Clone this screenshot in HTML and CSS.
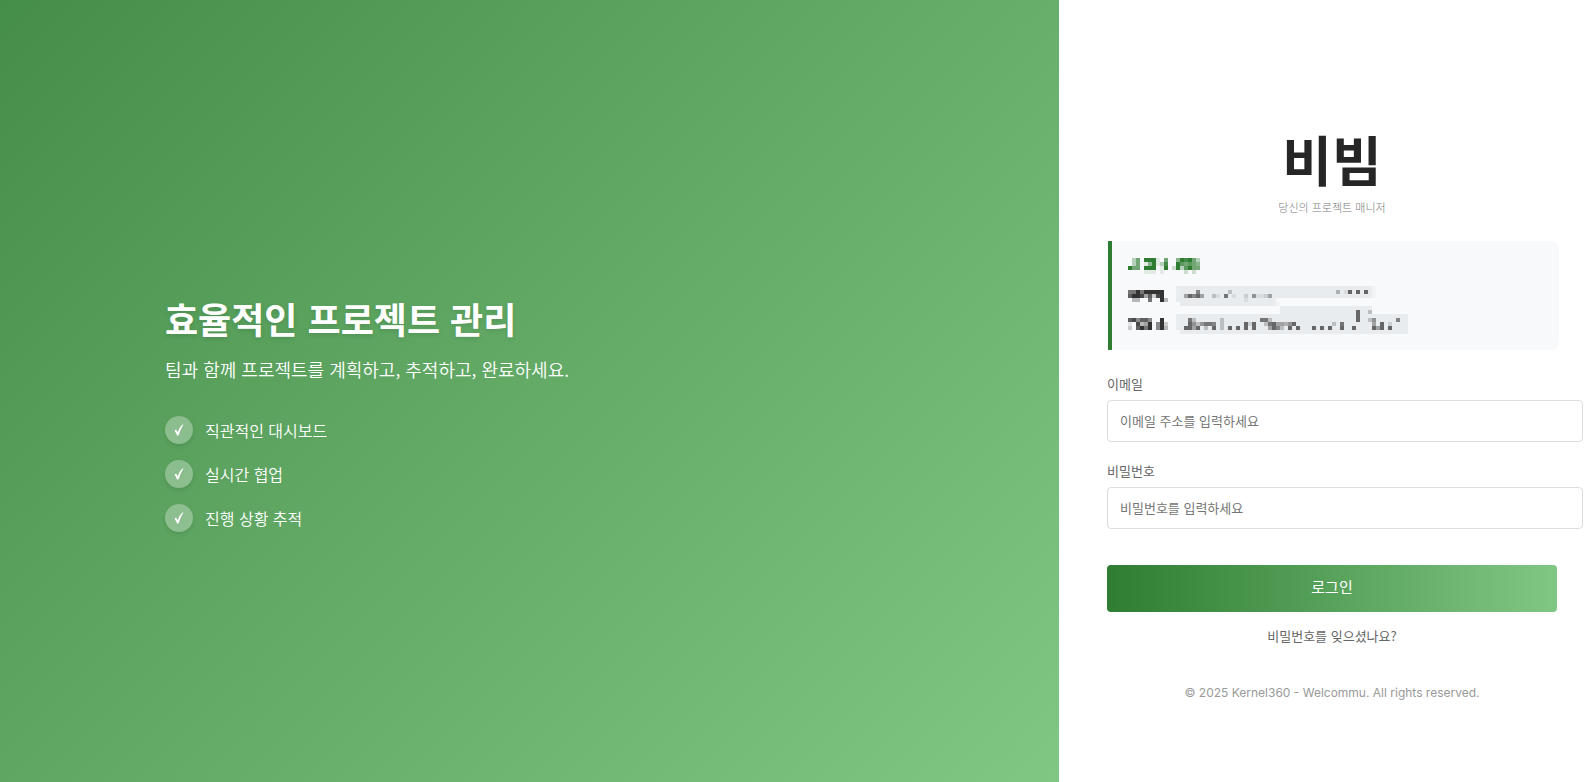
FILE: index.html
```html
<!DOCTYPE html>
<html lang="ko">
<head>
<meta charset="utf-8">
<title>비빔</title>
<link rel="stylesheet" href="styles.css">
</head>
<body>
<main class="page">
  <section class="hero">
    <div class="hero-content">
      <h1 class="hero-title">효율적인 프로젝트 관리</h1>
      <p class="hero-text">팀과 함께 프로젝트를 계획하고, 추적하고, 완료하세요.</p>
      <ul class="features">
        <li class="feature"><span class="check"><svg viewBox="0 0 10 12" width="10" height="12"><path d="M.5 6.8 2 5.6 3.8 8.2C5 4.800 6.600 2 8.800.3L9.400.8C7.500 3.500 6 7 4.700 11.300L3 11.500C2.400 9.600 1.600 8 .5 6.800Z"/></svg></span>직관적인 대시보드</li>
        <li class="feature"><span class="check"><svg viewBox="0 0 10 12" width="10" height="12"><path d="M.5 6.8 2 5.6 3.8 8.2C5 4.800 6.600 2 8.800.3L9.400.8C7.500 3.500 6 7 4.700 11.300L3 11.500C2.400 9.600 1.600 8 .5 6.800Z"/></svg></span>실시간 협업</li>
        <li class="feature"><span class="check"><svg viewBox="0 0 10 12" width="10" height="12"><path d="M.5 6.8 2 5.6 3.8 8.2C5 4.800 6.600 2 8.800.3L9.400.8C7.500 3.500 6 7 4.700 11.300L3 11.500C2.400 9.600 1.600 8 .5 6.800Z"/></svg></span>진행 상황 추적</li>
      </ul>
    </div>
  </section>
  <section class="login">
    <header class="brand">
      <div class="brand-name">비빔</div>
      <p class="brand-text">당신의 프로젝트 매니저</p>
    </header>
    <div class="account">
      <svg class="mosaic" id="mosaic" viewBox="0 0 70 20" width="280" height="80" shape-rendering="crispEdges">
        <path fill="#e8ecef" d="M13 7H61V10H37V12H13ZM38 12H61V14H70V19H13V14H38Z"/>
        <path fill="#eaedf0" d="M12 7H13V11H12ZM12 14H13V18H12Z"/>
        <path fill="#f1f3f5" d="M61 7H62V10H61ZM37 11H38V12H37Z"/>
      </svg>
    </div>
    <form class="form">
      <label class="label" for="email">이메일</label>
      <input class="input" id="email" type="email" placeholder="이메일 주소를 입력하세요">
      <label class="label" for="password">비밀번호</label>
      <input class="input" id="password" type="password" placeholder="비밀번호를 입력하세요">
      <button class="submit" type="button">로그인</button>
    </form>
    <a class="forgot" href="#">비밀번호를 잊으셨나요?</a>
    <footer class="footer">© 2025 Kernel360 - Welcommu. All rights reserved.</footer>
  </section>
</main>
<script src="mosaic.js"></script>
</body>
</html>
```
FILE: styles.css
```css
body {
  margin: 0;
  font-family: "Noto Sans CJK KR", sans-serif;
  background: #fff;
  overflow-x: hidden;
}

.page {
  display: grid;
  grid-template-columns: 1059fr 535fr;
  min-height: 100vh;
}

.hero {
  display: flex;
  align-items: center;
  justify-content: center;
  padding: 46px 64px 0;
  background: linear-gradient(135deg, #458e49, #81c784);
  color: #fff;
}

.hero-content {
  flex: 0 1 729px;
}

.hero-title {
  margin: 0 0 15px;
  font-size: 36px;
  line-height: 44px;
  font-weight: 700;
  text-shadow: 0 2px 4px rgba(0, 0, 0, 0.1);
}

.hero-text {
  margin: 0 0 33px;
  font-size: 18px;
  line-height: 28px;
  font-weight: 350;
}

.features {
  display: grid;
  gap: 16px;
  margin: 0;
  padding: 0;
  list-style: none;
}

.feature {
  display: flex;
  align-items: center;
  gap: 12px;
  font-size: 16px;
  line-height: 28px;
  font-weight: 350;
}

.check {
  display: flex;
  align-items: center;
  justify-content: center;
  width: 28px;
  height: 28px;
  border-radius: 50%;
  background: rgba(255, 255, 255, 0.3);
  box-shadow: 0 2px 4px rgba(0, 0, 0, 0.1);
}

.check path {
  fill: #fff;
}

.login {
  display: flex;
  flex-direction: column;
  justify-content: center;
  padding: 47px 37px 0 48px;
}

.brand {
  margin-bottom: 26px;
  text-align: center;
}

.brand-name {
  font-size: 54px;
  line-height: 64px;
  font-weight: 700;
  color: #262626;
}

.brand-text {
  margin: 8px 0 0;
  font-size: 11px;
  line-height: 16px;
  font-weight: 300;
  color: #777;
}

.account {
  margin: 0 -2px 0 1px;
  padding: 17px 16px 12px;
  border-left: 4px solid #2e7d32;
  border-radius: 0 8px 8px 0;
  background: #f8f9fb;
}

.mosaic {
  display: block;
}

.form {
  display: flex;
  flex-direction: column;
  align-items: flex-start;
  margin-top: 24px;
}

.label {
  margin-bottom: 6px;
  font-size: 13px;
  line-height: 20px;
  color: #666;
}

.input {
  width: 100%;
  height: 40px;
  box-sizing: content-box;
  margin: 0 0 19px;
  padding: 0 12px;
  border: 1px solid #ddd;
  border-radius: 4px;
  font-family: inherit;
  font-size: 13px;
  background: #fff;
}

.input::placeholder {
  color: #757575;
}

.submit {
  width: 100%;
  height: 47px;
  margin-top: 17px;
  padding: 0 0 4px;
  border: 0;
  border-radius: 4px;
  background: linear-gradient(90deg, #2e7d32, #81c784);
  color: #fff;
  font-family: inherit;
  font-size: 15px;
}

.forgot {
  align-self: center;
  margin-top: 14px;
  font-size: 13px;
  line-height: 20px;
  color: #666;
  text-decoration: none;
}

.footer {
  margin-top: 37px;
  text-align: center;
  font-family: Inter, sans-serif;
  font-size: 12px;
  line-height: 20px;
  color: #999;
}
```
FILE: mosaic.js
```js
// Each run: colour, row, first column, shades (0 = empty, 9 = solid).
const GREEN = "#2e7d32";
const DARK = "#333333";
const GREY = "#666666";
const runs = [
  [GREEN, 0, 1, "36099910600598963"],
  [GREEN, 1, 1, "36015913800976765"],
  [GREEN, 2, 0, "966099901902937966"],
  [GREEN, 3, 4, "11101000002020"],
  [DARK, 8, 0, "669699999"],
  [DARK, 9, 0, "799847289"],
  [DARK, 10, 1, "33006002"],
  [DARK, 10, 8, "93"],
  [DARK, 15, 0, "785775009"],
  [DARK, 16, 0, "1083490592"],
  [DARK, 17, 0, "2079690593"],
  [GREY, 8, 17, "700000003"],
  [GREY, 9, 14, "5979500310801002061125"],
  [GREY, 10, 29, "1"],
  [GREY, 8, 52, "40190909"],
  [GREY, 15, 15, "8300000030000000008830"],
  [GREY, 16, 15, "963688703000009290038955469"],
  [GREY, 17, 14, "995903090309090909000597309090"],
  [GREY, 13, 57, "9003"],
  [GREY, 14, 57, "9"],
  [GREY, 15, 57, "9003600000700"],
  [GREY, 16, 51, "308000000050902"],
  [GREY, 17, 46, "90909009009000095909"]
];
const svg = document.getElementById("mosaic");
for (const [colour, row, start, shades] of runs) {
  [...shades].forEach((shade, i) => {
    if (shade === "0") return;
    const cell = document.createElementNS("http://www.w3.org/2000/svg", "rect");
    cell.setAttribute("x", start + i);
    cell.setAttribute("y", row);
    cell.setAttribute("width", 1);
    cell.setAttribute("height", 1);
    cell.setAttribute("fill", colour);
    cell.setAttribute("fill-opacity", shade / 9);
    svg.append(cell);
  });
}
```
